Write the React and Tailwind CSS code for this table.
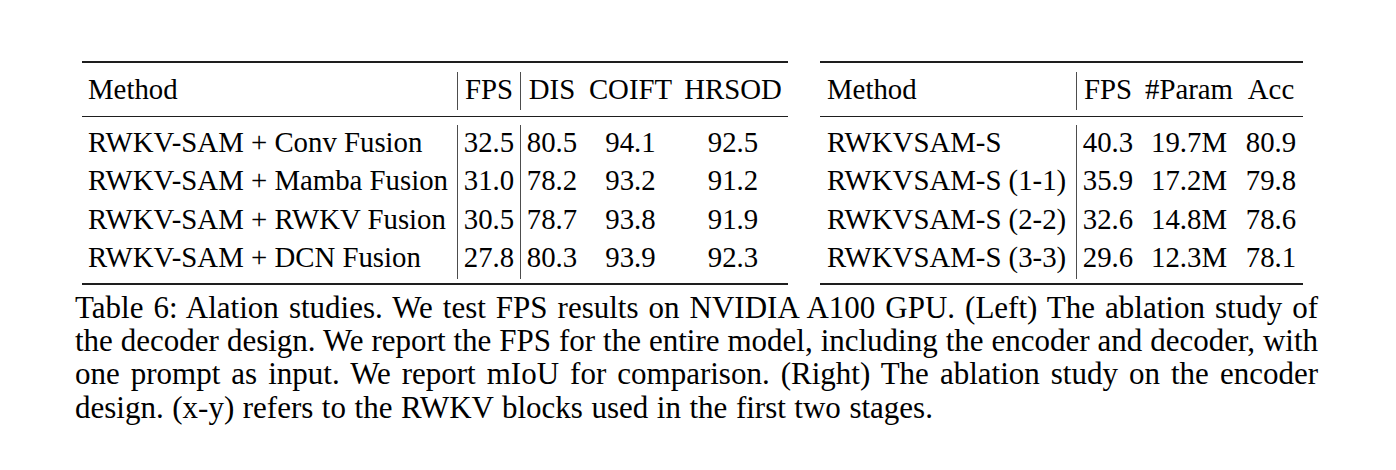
const leftRows = [
  ['RWKV-SAM + Conv Fusion', '32.5', '80.5', '94.1', '92.5'],
  ['RWKV-SAM + Mamba Fusion', '31.0', '78.2', '93.2', '91.2'],
  ['RWKV-SAM + RWKV Fusion', '30.5', '78.7', '93.8', '91.9'],
  ['RWKV-SAM + DCN Fusion', '27.8', '80.3', '93.9', '92.3'],
];

const rightRows = [
  ['RWKVSAM-S', '40.3', '19.7M', '80.9'],
  ['RWKVSAM-S (1-1)', '35.9', '17.2M', '79.8'],
  ['RWKVSAM-S (2-2)', '32.6', '14.8M', '78.6'],
  ['RWKVSAM-S (3-3)', '29.6', '12.3M', '78.1'],
];

// column specs: width, align, whether a vertical rule sits on the left
const leftCols = [
  { w: 'w-[375px]', align: 'text-left pl-[6px]' },
  { w: 'w-[63px]', align: 'text-center', rule: true },
  { w: 'w-[63px]', align: 'text-center', rule: true },
  { w: 'w-[95px]', align: 'text-center' },
  { w: 'w-[110px]', align: 'text-center' },
];

const rightCols = [
  { w: 'w-[256px]', align: 'text-left pl-[7px]' },
  { w: 'w-[63px]', align: 'text-center', rule: true },
  { w: 'w-[100px]', align: 'text-center' },
  { w: 'w-[64px]', align: 'text-center' },
];

function Row({ cells, cols, h }) {
  return (
    <div className="flex">
      {cells.map((c, i) => (
        <div
          key={i}
          className={`${cols[i].w} ${cols[i].align} ${h} leading-[35px] whitespace-nowrap ${
            cols[i].rule ? 'border-l border-[#4d4d4d]' : ''
          }`}
        >
          {c}
        </div>
      ))}
    </div>
  );
}

function BookTable({ head, rows, cols }) {
  return (
    <div className="border-t-2 border-[#1e1e1e]">
      <div className="mt-[9px]">
        <Row cells={head} cols={cols} h="h-[38px]" />
      </div>
      <div className="mt-[6px] border-t border-[#1e1e1e]" />
      <div className="mt-[8px]">
        {rows.map((r) => (
          <Row key={r[0]} cells={r} cols={cols} h="h-[38.4px]" />
        ))}
      </div>
      <div className="mt-[4px] border-t-2 border-[#1e1e1e]" />
    </div>
  );
}

const captionLines = [
  'Table 6: Alation studies. We test FPS results on NVIDIA A100 GPU. (Left) The ablation study of',
  'the decoder design. We report the FPS for the entire model, including the encoder and decoder, with',
  'one prompt as input. We report mIoU for comparison. (Right) The ablation study on the encoder',
];

export default function App() {
  return (
    <div className="h-[470px] w-[1396px] bg-white text-black font-['Liberation_Serif','Times_New_Roman',serif]">
      <div className="flex gap-[32px] pl-[82px] pt-[61px] text-[28.8px]">
        <BookTable head={['Method', 'FPS', 'DIS', 'COIFT', 'HRSOD']} rows={leftRows} cols={leftCols} />
        <BookTable head={['Method', 'FPS', '#Param', 'Acc']} rows={rightRows} cols={rightCols} />
      </div>
      <div className="ml-[75px] mt-[6px] w-[1243px] text-[31px] leading-[33.4px]">
        {captionLines.map((l) => (
          <div key={l} className="text-justify [text-align-last:justify]">
            {l}
          </div>
        ))}
        <div className="[word-spacing:0.8px]">
          design. (x-y) refers to the RWKV blocks used in the first two stages.
        </div>
      </div>
    </div>
  );
}
